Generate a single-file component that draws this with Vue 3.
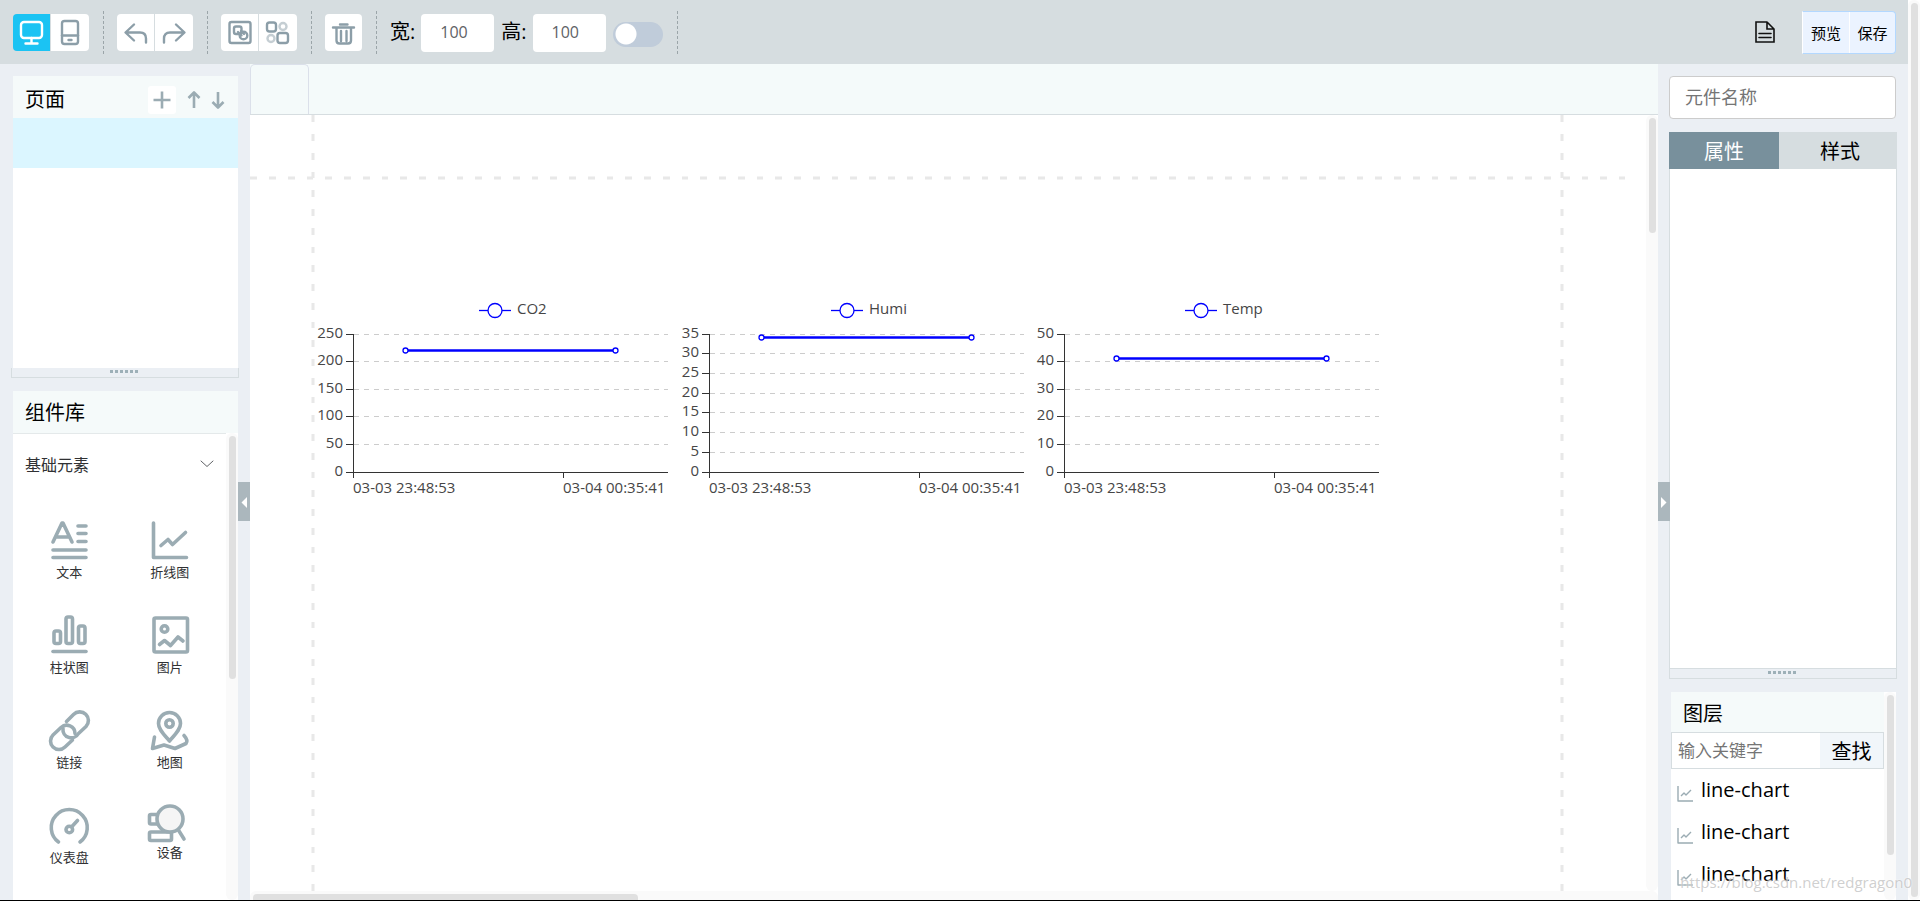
<script setup>
import { ref } from 'vue'

const width = ref('100')
const height = ref('100')
const locked = ref(false)
const elementName = ref('')
const keyword = ref('')

const components = [
  { id: 'text', label: '文本' },
  { id: 'line', label: '折线图' },
  { id: 'bar', label: '柱状图' },
  { id: 'image', label: '图片' },
  { id: 'link', label: '链接' },
  { id: 'map', label: '地图' },
  { id: 'gauge', label: '仪表盘' },
  { id: 'device', label: '设备' }
]

const layers = ['line-chart', 'line-chart', 'line-chart']

const TOP = 34
const PLOT = 138

function makeChart(name, left, legendX, max, step, value) {
  const ticks = []
  for (let v = 0; v <= max; v += step) {
    ticks.push({ v, y: Math.floor(TOP + PLOT - (v / max) * PLOT) })
  }
  return { name, left, legendX, ticks, y: Math.floor(TOP + PLOT - (value / max) * PLOT) }
}

const charts = [
  makeChart('CO2', 64, 181, 250, 50, 221),
  makeChart('Humi', 420, 177, 35, 5, 34),
  makeChart('Temp', 775, 176, 50, 10, 41)
]
</script>

<template>
  <div class="page">
    <div class="app">
      <header class="toolbar">
        <div class="group">
          <button class="tool active" aria-label="desktop">
            <svg viewBox="0 0 38 37"><rect x="8" y="8" width="21" height="16" rx="3" /><path d="M18.5 24v5M12.500 29.500h12" /></svg>
          </button>
          <button class="tool" aria-label="mobile">
            <svg viewBox="0 0 38 37"><rect x="11" y="7" width="16" height="23" rx="2.500" /><path d="M11 21.500h16" /><path d="M17.500 26h3" /></svg>
          </button>
        </div>
        <i class="divider"></i>
        <div class="group">
          <button class="tool" aria-label="undo">
            <svg viewBox="0 0 38 37"><path d="M17 10.500L8.500 18.500l8.500 8M9 18.500h14q6 0 6 6v4" /></svg>
          </button>
          <button class="tool" aria-label="redo">
            <svg viewBox="0 0 38 37"><path d="M21 10.500l8.500 8-8.500 8M29 18.500H15q-6 0-6 6v4" /></svg>
          </button>
        </div>
        <i class="divider"></i>
        <div class="group">
          <button class="tool" aria-label="group">
            <svg viewBox="0 0 38 37"><rect x="8.500" y="8" width="21" height="21" rx="2" /><rect x="13" y="12.500" width="7.500" height="7.500" rx="2" /><circle cx="22.500" cy="21.500" r="3.800" /><path d="M17 18l3.500 3.500M20 17l3 3" /></svg>
          </button>
          <button class="tool" aria-label="ungroup">
            <svg viewBox="0 0 38 37"><rect x="8" y="8.500" width="9" height="9" rx="2.500" /><rect x="18.500" y="19" width="10.500" height="10" rx="2.500" /><g class="faint"><circle cx="24" cy="12.500" r="3.500" /><circle cx="12" cy="24.500" r="3.500" /></g></svg>
          </button>
        </div>
        <i class="divider"></i>
        <div class="group">
          <button class="tool" aria-label="delete">
            <svg viewBox="0 0 38 37"><path d="M8 13.500h21M15 10.500h7.500M11.500 14v12.500q0 3 3 3h8.500q3 0 3-3V14M16 17v10M21.500 17v10" /></svg>
          </button>
        </div>
        <i class="divider"></i>
        <label class="size">宽:<input v-model="width" type="text" /></label>
        <label class="size">高:<input v-model="height" type="text" /></label>
        <input v-model="locked" class="switch" type="checkbox" aria-label="lock" />
        <i class="divider"></i>
        <div class="actions">
          <button class="doc" aria-label="document">
            <svg viewBox="0 0 20 22"><path d="M1 1h11l7 7v13H1zM12 1v7h7M4 12.500h12M4 16.500h12" /></svg>
          </button>
          <div class="publish">
            <button>预览</button><button>保存</button>
          </div>
        </div>
      </header>

      <div class="body">
        <aside class="left">
          <section class="pages">
            <div class="pages-head">
              <h2>页面</h2>
              <button class="add" aria-label="add page"><svg viewBox="0 0 28 28"><path d="M5.500 14h17M14 5.500v17" /></svg></button>
              <button class="move" aria-label="move up"><svg viewBox="0 0 24 28"><path d="M12 22V6M6.500 12L12 6.500 17.500 12" /></svg></button>
              <button class="move" aria-label="move down"><svg viewBox="0 0 24 28"><path d="M12 6v16M6.500 16l5.500 5.500 5.500-5.500" /></svg></button>
            </div>
            <div class="page-row"></div>
          </section>
          <div class="handle"><i v-for="n in 6" :key="n"></i></div>

          <section class="library">
            <h2>组件库</h2>
            <div class="library-body">
              <div class="library-list">
                <button class="category">
                  基础元素
                  <svg viewBox="0 0 14 8"><path d="M1 1l6 5.500L13 1" /></svg>
                </button>
                <div class="items">
                  <button v-for="c in components" :key="c.id" class="item" :class="c.id">
                    <svg viewBox="0 0 42 42">
                      <path v-if="c.id === 'text'" d="M5 22l9-19h1l9 19M9 17h11M30 6h8M30 13.500h8M30 21.500h8M5 30h33M5 37.500h33" />
                      <path v-else-if="c.id === 'line'" d="M4.500 3v34.500H37.500M12 25.500l7-6 4.500 5 13-12" />
                      <g v-else-if="c.id === 'bar'"><rect x="6" y="16" width="6.500" height="12.500" rx="2" /><rect x="18" y="2" width="6.500" height="26.500" rx="2" /><rect x="30.500" y="11" width="6.500" height="17.500" rx="2" /><path d="M5 36.500h33" /></g>
                      <g v-else-if="c.id === 'image'"><rect x="5" y="3" width="33.500" height="34" rx="1.500" /><circle cx="15.500" cy="14" r="3.300" /><path d="M10.500 29.500l5-4 6 5 7.500-8.500 5 4" /></g>
                      <g v-else-if="c.id === 'link'"><path d="M18.500 11.500l7-7a8.300 8.300 0 0 1 12.500 12l-7.500 7a8.300 8.300 0 0 1-15.500-5" /><path d="M24.500 30L17 37a8.300 8.300 0 0 1-12-12l8-7.500a8.300 8.300 0 0 1 14 6" /></g>
                      <g v-else-if="c.id === 'map'"><path d="M20.500 31C14.500 24 9.500 19.500 9.500 13.500a11 11 0 0 1 22 0C31.500 19.500 26.500 24 20.500 31z" /><circle cx="20.500" cy="13.500" r="3.700" /><path d="M5.500 27l-2 11.500 11.500-3.500L26 38.500 37 33.500q2.500-3-2-8" /></g>
                      <g v-else-if="c.id === 'gauge'"><path d="M10.500 37a18 18 0 1 1 21.500 0" /><circle cx="21.300" cy="24.500" r="3.300" /><path d="M24 21.500l5.500-6" /></g>
                      <g v-else><rect x="0.500" y="9.500" width="12" height="9.500" rx="1.500" /><rect x="0.500" y="27" width="22" height="8.500" rx="1.500" /><circle class="lens" cx="21" cy="14" r="13" /><path d="M30 26l5 8" /></g>
                    </svg>
                    <span>{{ c.label }}</span>
                  </button>
                </div>
              </div>
              <div class="vbar library-bar"><i></i></div>
            </div>
          </section>
          <button class="collapse" aria-label="collapse left panel"><svg viewBox="0 0 12 38"><path d="M9 14v11l-5.500-5.500z" /></svg></button>
        </aside>

        <main class="center">
          <div class="tabs"><div class="tab"></div></div>
          <div class="workspace">
            <div class="canvas">
              <svg class="guide vertical start"><line x1="2" y1="0" x2="2" y2="3000" /></svg>
              <svg class="guide vertical end"><line x1="2" y1="0" x2="2" y2="3000" /></svg>
              <svg class="guide horizontal"><line x1="0" y1="2" x2="3000" y2="2" /></svg>
              <svg v-for="chart in charts" :key="chart.name" class="chart" :style="{ left: chart.left + 'px' }" viewBox="0 0 360 200">
                <g class="series">
                  <path :d="`M${chart.legendX - 16} 10.500h32`" />
                  <circle :cx="chart.legendX" cy="10.500" r="7" />
                </g>
                <text :x="chart.legendX + 22" y="14">{{ chart.name }}</text>
                <g v-for="t in chart.ticks" :key="t.v">
                  <path v-if="t.v" class="grid" :d="`M40 ${t.y + 0.5}h314`" />
                  <path class="axis" :d="`M32 ${t.y + 0.5}h8`" />
                  <text class="end" x="29" :y="t.y + 4">{{ t.v }}</text>
                </g>
                <path class="axis" d="M39.500 34v144M39 172.500h315M249.500 172v6" />
                <text x="39" y="193">03-03 23:48:53</text>
                <text x="249" y="193">03-04 00:35:41</text>
                <g class="series">
                  <path class="trend" :d="`M91.500 ${chart.y + 0.5}h210`" />
                  <circle cx="91.500" :cy="chart.y + 0.5" r="2.500" />
                  <circle cx="301.500" :cy="chart.y + 0.5" r="2.500" />
                </g>
              </svg>
            </div>
            <div class="vbar canvas-bar"><i></i></div>
          </div>
          <div class="hbar"><i></i></div>
        </main>

        <aside class="right">
          <input v-model="elementName" class="name" type="text" placeholder="元件名称" aria-label="元件名称" />
          <div class="switcher">
            <button class="on">属性</button>
            <button>样式</button>
          </div>
          <div class="props"></div>
          <div class="handle boxed"><i v-for="n in 6" :key="n"></i></div>
          <section class="layers">
            <div class="layers-main">
              <h2>图层</h2>
              <div class="search">
                <input v-model="keyword" type="text" placeholder="输入关键字" aria-label="输入关键字" />
                <button>查找</button>
              </div>
              <ul>
                <li v-for="(name, i) in layers" :key="i">
                  <svg viewBox="0 0 16 16"><path d="M1 0v15h15M4 10l3-3 2 2 5-5" /></svg>{{ name }}
                </li>
              </ul>
            </div>
            <div class="vbar layers-bar"><i></i></div>
          </section>
          <button class="collapse" aria-label="collapse right panel"><svg viewBox="0 0 12 38"><path d="M3 14v11l5.500-5.500z" /></svg></button>
        </aside>
      </div>
    </div>
    <div class="vbar page-bar"><i></i></div>
    <span class="watermark">https://blog.csdn.net/redgragon0</span>
  </div>
</template>

<style>
body {
  margin: 0;
  overflow: hidden;
}
</style>

<style scoped>
* {
  box-sizing: border-box;
}
.page {
  position: relative;
  display: flex;
  height: 100vh;
  overflow: hidden;
  border-bottom: 1px solid #000;
  background: #fff;
  color: #000;
  font-family: "Open Sans", "Noto Sans CJK SC", sans-serif;
}
button,
input {
  padding: 0;
  border: 0;
  background: none;
  color: inherit;
  font-family: inherit;
}
h2 {
  margin: 0;
  font-size: 20px;
  font-weight: 400;
}
svg {
  display: block;
  fill: none;
  stroke-linecap: round;
  stroke-linejoin: round;
}
.app {
  display: flex;
  flex: 1;
  flex-direction: column;
  min-width: 0;
}

/* Toolbar */
.toolbar {
  display: flex;
  flex: none;
  align-items: center;
  height: 64px;
  padding: 0 12px 0 13px;
  background: #d6dde0;
}
.group {
  display: flex;
  gap: 1px;
  overflow: hidden;
  border-radius: 4px;
}
.tool {
  width: 38px;
  height: 37px;
  background: #fff;
}
.tool:first-child {
  width: 37px;
}
.tool svg {
  width: 38px;
  height: 37px;
  stroke: #8c9ea8;
  stroke-width: 2.4;
}
.tool.active {
  background: #1bc3f3;
}
.tool.active svg {
  stroke: #fff;
}
.faint {
  opacity: 0.5;
}
.divider {
  width: 0;
  height: 43px;
  margin: 0 13px 0 14px;
  border-left: 1px dashed #9ba5a9;
}
.size {
  display: flex;
  gap: 6px;
  align-items: center;
  margin-right: 7px;
  font-size: 20px;
  line-height: 30px;
}
.size input {
  width: 73px;
  height: 38px;
  margin-top: 2px;
  padding: 0 0 2px 19px;
  border-radius: 4px;
  background: #fff;
  color: #606266;
  font-size: 16px;
}
.switch {
  width: 50px;
  height: 25px;
  margin: 4px 0 0;
  border-radius: 13px;
  appearance: none;
  background: radial-gradient(circle at 13px 12px, #fff 10px, transparent 11px) #c0ccda;
}
.actions {
  display: flex;
  gap: 27px;
  align-items: center;
  margin-left: auto;
}
.doc svg {
  width: 20px;
  height: 22px;
  stroke: #111;
  stroke-width: 1.6;
  stroke-linejoin: miter;
}
.publish {
  display: flex;
  height: 43px;
  overflow: hidden;
  border: 1px solid #b3d8ff;
  border-left-color: #fff;
  border-radius: 0 4px 4px 0;
  background: #ebf3ff;
}
.publish button {
  width: 46px;
  font-size: 15px;
}
.publish button + button {
  border-left: 1px solid #fff;
}

/* Shell */
.body {
  display: flex;
  flex: 1;
  min-height: 0;
}
.left,
.right {
  position: relative;
  display: flex;
  flex: none;
  flex-direction: column;
  width: 250px;
  background: #ebeff4;
}
.left {
  padding: 12px 12px 0 13px;
}
.right {
  padding: 12px 11px 0;
}
.handle {
  display: flex;
  flex: none;
  gap: 2px;
  justify-content: center;
  height: 10px;
  margin: 0 -1px 13px -2px;
  padding: 2px 3px 0 0;
  border: 1px solid #d6dde0;
  border-top: 0;
}
.handle i {
  width: 3px;
  height: 3px;
  background: #9db0b8;
}
.handle.boxed {
  height: 11px;
  margin: 0 0 13px;
  border-top: 1px solid #d6dde0;
}
.vbar {
  flex: none;
  width: 12px;
  padding: 3px;
  border-radius: 6px;
  background: #fafafa;
}
.vbar i {
  display: block;
  width: 7px;
  border-radius: 4px;
  background: #e0e0e0;
}
.page-bar i {
  height: 100%;
}
.library-bar i {
  height: 243px;
}
.canvas-bar i {
  height: 115px;
}
.layers-bar i {
  height: 160px;
}
.collapse {
  position: absolute;
  top: 50%;
  width: 12px;
  height: 39px;
  background: #abb7bd;
}
.left .collapse {
  right: 0;
}
.right .collapse {
  left: 0;
}
.collapse svg {
  width: 12px;
  height: 38px;
  fill: #fff;
}

/* Pages */
.pages {
  flex: none;
  height: 292px;
  background: #fff;
}
.pages-head {
  display: flex;
  align-items: center;
  height: 42px;
  padding: 5px 8px 0 12px;
  background: #f5fafa;
}
.pages-head h2 {
  flex: 1;
  line-height: 30px;
}
.add {
  margin-right: 6px;
  border-radius: 3px;
  background: #fff;
}
.pages-head svg {
  width: 24px;
  height: 28px;
  stroke: #9bacb3;
  stroke-width: 2.6;
  stroke-linecap: butt;
}
.pages-head .add svg {
  width: 28px;
}
.page-row {
  height: 50px;
  background: #dbf6ff;
}

/* Component library */
.library {
  display: flex;
  flex: 1;
  flex-direction: column;
  min-height: 0;
  overflow: hidden;
  background: #fff;
}
.library h2 {
  flex: none;
  height: 42px;
  padding-left: 12px;
  background: #f5fafa;
  line-height: 44px;
}
.library-body {
  display: flex;
  flex: 1;
  min-height: 0;
}
.library-list {
  flex: 1;
  border-top: 1px solid #e4e9ea;
}
.category {
  display: flex;
  align-items: center;
  justify-content: space-between;
  width: 100%;
  height: 60px;
  padding: 0 12px;
  color: #303133;
  font-size: 16px;
}
.category svg {
  width: 14px;
  height: 8px;
  stroke: #606266;
}
.items {
  display: grid;
  grid-template-columns: repeat(2, 1fr);
  padding: 0 6px;
}
.item {
  display: flex;
  flex-direction: column;
  align-items: center;
  justify-content: flex-start;
  height: 95px;
  padding-top: 26px;
  color: #303133;
  font-size: 13px;
  line-height: 20px;
}
.item svg {
  flex: none;
  width: 42px;
  height: 42px;
  overflow: visible;
  stroke: #9bacb3;
  stroke-width: 3.6;
}
.item.device svg {
  margin-bottom: -5px;
}
.lens {
  fill: #f5f5f5;
}

/* Canvas */
.center {
  display: flex;
  flex: 1;
  flex-direction: column;
  min-width: 0;
  background: #fff;
}
.tabs {
  flex: none;
  height: 51px;
  border-bottom: 1px solid #d6dde0;
  background: #f4fafa;
}
.tab {
  width: 59px;
  height: 50px;
  border: 1px solid #dbe0ea;
  border-bottom: 0;
  border-radius: 5px 5px 0 0;
}
.workspace {
  display: flex;
  flex: 1;
  min-height: 0;
}
.canvas {
  position: relative;
  flex: 1;
  overflow: hidden;
}
.guide {
  position: absolute;
  stroke: #e8e8e8;
  stroke-width: 3;
  stroke-dasharray: 7 12 7 12 7 12 6 12;
  stroke-linecap: butt;
}
.vertical {
  top: 0;
  width: 4px;
  height: 100%;
}
.start {
  left: 61px;
}
.end {
  right: 82px;
}
.horizontal {
  top: 61px;
  left: 0;
  width: calc(100% - 21px);
  height: 4px;
}
.chart {
  position: absolute;
  top: 185px;
  width: 360px;
  height: 200px;
  overflow: visible;
  stroke-linecap: butt;
}
.chart text {
  fill: #464646;
  font-size: 15px;
}
.chart .end {
  text-anchor: end;
}
.axis {
  stroke: #333;
}
.grid {
  stroke: #ccc;
  stroke-dasharray: 5 5;
}
.series {
  fill: #fff;
  stroke: #00f;
  stroke-width: 1.3;
}
.trend {
  stroke-width: 2.4;
}
.hbar {
  flex: none;
  height: 9px;
  padding: 3px 3px 0;
  border-radius: 6px 6px 0 0;
  background: #fafafa;
}
.hbar i {
  display: block;
  width: 385px;
  height: 6px;
  border-radius: 4px 4px 0 0;
  background: #e0e0e0;
}

/* Properties */
.name {
  flex: none;
  height: 43px;
  margin-right: 1px;
  padding: 0 15px 2px;
  border: 1px solid #ccc;
  border-radius: 4px;
  background: #fff;
  font-size: 18px;
}
input::placeholder {
  color: #757575;
  opacity: 1;
}
.switcher {
  display: flex;
  flex: none;
  height: 37px;
  margin-top: 13px;
  background: #d6dde0;
}
.switcher button {
  flex: 1;
  padding-left: 4px;
  font-size: 20px;
}
.switcher .on {
  flex: none;
  width: 110px;
  padding: 0;
  background: #78909c;
  color: #fff;
}
.props {
  flex: 1;
  border: 1px solid #d6dde0;
  border-width: 0 1px;
  background: #fff;
}

/* Layers */
.layers {
  display: flex;
  flex: none;
  height: 208px;
  margin: 0 1px 0 2px;
  overflow: hidden;
  background: #fff;
}
.layers-main {
  flex: 1;
  min-width: 0;
}
.layers h2 {
  height: 40px;
  padding-left: 12px;
  background: #f5fafa;
  line-height: 44px;
}
.search {
  display: flex;
  height: 37px;
  border: 1px solid #d6dde0;
}
.search input {
  flex: 1;
  min-width: 0;
  padding: 0 6px;
  font-size: 17px;
}
.search button {
  width: 63px;
  background: #f1f6fa;
  font-size: 20px;
}
.layers ul {
  margin: 0;
  padding: 0;
  list-style: none;
}
.layers li {
  display: flex;
  gap: 8px;
  align-items: center;
  height: 42px;
  padding-left: 6px;
  font-size: 20px;
  line-height: 42px;
}
.layers li svg {
  width: 16px;
  height: 16px;
  margin-top: 7px;
  stroke: #9bacb3;
  stroke-width: 1.4;
  stroke-linecap: butt;
}
.watermark {
  position: absolute;
  right: 8px;
  bottom: 7px;
  color: rgba(180, 180, 180, 0.65);
  font-size: 15px;
  line-height: 22px;
  text-shadow: 0 0 2px #fff;
}
</style>
